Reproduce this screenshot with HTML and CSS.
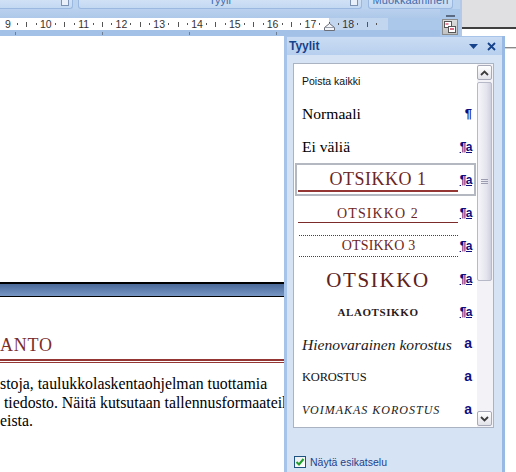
FILE: index.html
```html
<!DOCTYPE html>
<html lang="fi">
<head>
<meta charset="utf-8">
<title>Tyylit</title>
<link rel="stylesheet" href="styles.css">
</head>
<body>
<div class="app">
  <div class="top">
    <div class="ribbon">
      <div class="groups">
        <div class="grp g1"><span class="launch"></span></div>
        <div class="grp g2"><span class="glabel">Tyyli</span><span class="launch"></span></div>
        <div class="grp g3"><span class="glabel">Muokkaaminen</span></div>
      </div>
      <div class="rulerrow">
        <div class="rulercol">
          <div class="band"></div>
          <div class="ruler">
            <div class="u"><span class="s n">9</span><span class="s"><i class="dot"></i></span><span class="s"><i class="tick"></i></span><span class="s"><i class="dot"></i></span></div>
            <div class="u"><span class="s n">10</span><span class="s"><i class="dot"></i></span><span class="s"><i class="tick"></i></span><span class="s"><i class="dot"></i></span></div>
            <div class="u"><span class="s n">11</span><span class="s"><i class="dot"></i></span><span class="s"><i class="tick"></i></span><span class="s"><i class="dot"></i></span></div>
            <div class="u"><span class="s n">12</span><span class="s"><i class="dot"></i></span><span class="s"><i class="tick"></i></span><span class="s"><i class="dot"></i></span></div>
            <div class="u"><span class="s n">13</span><span class="s"><i class="dot"></i></span><span class="s"><i class="tick"></i></span><span class="s"><i class="dot"></i></span></div>
            <div class="u"><span class="s n">14</span><span class="s"><i class="dot"></i></span><span class="s"><i class="tick"></i></span><span class="s"><i class="dot"></i></span></div>
            <div class="u"><span class="s n">15</span><span class="s"><i class="dot"></i></span><span class="s"><i class="tick"></i></span><span class="s"><i class="dot"></i></span></div>
            <div class="u"><span class="s n">16</span><span class="s"><i class="dot"></i></span><span class="s"><i class="tick"></i></span><span class="s"><i class="dot"></i></span></div>
            <div class="u"><span class="s n">17</span><span class="s"><i class="dot"></i></span><span class="s"><i class="tick"></i></span><span class="s"><i class="dot"></i></span></div>
            <div class="u"><span class="s n">18</span><span class="s"><i class="dot"></i></span><span class="s"><i class="tick"></i></span><span class="s"><i class="dot"></i></span></div>
            <svg class="indent" width="11" height="8" viewBox="0 0 11 8"><path d="M0.5 7.5 V4.5 L5.5 0.5 L10.5 4.5 V7.5 Z" fill="#f4f6fa" stroke="#6a6f78"/><path d="M1 4.5 H10" stroke="#9aa0aa"/></svg>
          </div>
          <div class="marks"><i></i><i></i><i></i><i></i></div>
        </div>
        <div class="sidecol">
          <div class="dash"></div>
          <div class="viewbtn">
            <svg width="14" height="14" viewBox="0 0 14 14">
              <rect x="1.5" y="1.5" width="7" height="6" fill="#fff" stroke="#555"/>
              <rect x="2.5" y="3" width="3" height="2" fill="#e58aa0"/>
              <rect x="5.5" y="6.5" width="7" height="6" fill="#fff" stroke="#555"/>
              <rect x="7" y="8" width="4" height="2" fill="#d96a86"/>
            </svg>
          </div>
        </div>
      </div>
    </div>
    <div class="win"></div>
  </div>

  <div class="main">
    <div class="doc">
      <div class="docgap"></div>
      <div class="docband"></div>
      <div class="doch">ANTO</div>
      <div class="docrule"></div>
      <div class="docp">
        <div class="ln">stoja, taulukkolaskentaohjelman tuottamia</div>
        <div class="ln"> tiedosto. Näitä kutsutaan tallennusformaateiksi</div>
        <div class="ln">eista.</div>
      </div>
    </div>

    <div class="pane">
      <div class="ptitle">
        <span class="ptext">Tyylit</span>
        <span class="pbtns">
          <svg width="9" height="5" viewBox="0 0 9 5"><path d="M0 0 H9 L4.5 5 Z" fill="#15428b"/></svg>
          <svg width="9" height="9" viewBox="0 0 9 9"><path d="M1 1 L8 8 M8 1 L1 8" stroke="#15428b" stroke-width="1.8"/></svg>
        </span>
      </div>
      <div class="pbody">
        <div class="list">
          <div class="items">
            <div class="row"><div class="pv plain clr">Poista kaikki</div><div class="ic"></div></div>
            <div class="row"><div class="pv plain norm">Normaali</div><div class="ic"><span class="para">¶</span></div></div>
            <div class="row"><div class="pv plain norm">Ei väliä</div><div class="ic"><span class="pa">¶a</span></div></div>
            <div class="row sel"><div class="pv h1">OTSIKKO 1</div><div class="ic"><span class="pa">¶a</span></div></div>
            <div class="row"><div class="pv h2">OTSIKKO 2</div><div class="ic"><span class="pa">¶a</span></div></div>
            <div class="row"><div class="pv h3">OTSIKKO 3</div><div class="ic"><span class="pa">¶a</span></div></div>
            <div class="row"><div class="pv ttl">OTSIKKO</div><div class="ic"><span class="pa">¶a</span></div></div>
            <div class="row"><div class="pv sub">ALAOTSIKKO</div><div class="ic"><span class="pa">¶a</span></div></div>
            <div class="row"><div class="pv plain subtle">Hienovarainen korostus</div><div class="ic"><span class="ca">a</span></div></div>
            <div class="row"><div class="pv plain emph">KOROSTUS</div><div class="ic"><span class="ca">a</span></div></div>
            <div class="row"><div class="pv plain intense">VOIMAKAS KOROSTUS</div><div class="ic"><span class="ca">a</span></div></div>
          </div>
          <div class="sbar">
            <div class="sbtn"><svg width="9" height="6" viewBox="0 0 9 6"><path d="M1 5 L4.5 1.5 L8 5" fill="none" stroke="#3c3c3c" stroke-width="1.8"/></svg></div>
            <div class="thumb"><i></i><i></i><i></i></div>
            <div class="strack"></div>
            <div class="sbtn"><svg width="9" height="6" viewBox="0 0 9 6"><path d="M1 1 L4.5 4.5 L8 1" fill="none" stroke="#3c3c3c" stroke-width="1.8"/></svg></div>
          </div>
        </div>
        <div class="chkrow">
          <span class="chk"><svg width="10" height="10" viewBox="0 0 10 10"><path d="M1.5 5 L4 7.5 L8.5 2" fill="none" stroke="#1e9e2a" stroke-width="2"/></svg></span>
          <span class="chklabel">Näytä esikatselu</span>
        </div>
      </div>
    </div>

    <div class="edge"><div class="edgeline"></div></div>
  </div>
</div>
</body>
</html>
```

FILE: styles.css
```css
* { box-sizing: border-box; }
html, body { margin: 0; padding: 0; }
body {
  width: 516px;
  height: 472px;
  overflow: hidden;
  background: #fff;
  font-family: "Liberation Sans", Arial, sans-serif;
}
.app { display: flex; flex-direction: column; width: 516px; height: 472px; }

/* ---------- top: ribbon + ruler ---------- */
.top { display: flex; height: 36px; flex: none; }
.ribbon { width: 460px; display: flex; flex-direction: column; background: #abc7ea; }
.groups {
  height: 9px; display: flex; overflow: hidden;
  background: #bcd3ef;
}
.grp {
  height: 9px;
  position: relative;
  display: flex; justify-content: center; align-items: flex-end;
  background: linear-gradient(#d0e1f6, #c3d8f2);
  border: 1px solid #9ab8e0; border-top: none;
  border-radius: 0 0 3px 3px;
  overflow: hidden;
}
.g1 { width: 73px; border-left: none; border-radius: 0 0 3px 0; }
.g2 { width: 284px; margin-left: 5px; }
.g3 { width: 85px; margin-left: 6px; }
.glabel {
  font-size: 11px; line-height: 11px; color: #3f6cab;
  margin-bottom: 2px; white-space: nowrap;
}
.g3 .glabel { letter-spacing: 0.1px; }
.launch {
  position: absolute; right: 3px; bottom: 2px;
  width: 8px; height: 6px;
  border: 1px solid #7d93b3; border-top: none;
  background: #e9f0fa;
}

.rulerrow { display: flex; height: 27px; }
.rulercol { width: 440px; display: flex; flex-direction: column; }
.band { height: 9px; background: linear-gradient(#bad1ee, #adc8ea); }
.ruler {
  position: relative;
  width: 388px; height: 12px;
  display: flex; padding-left: 3.3px;
  background: linear-gradient(90deg, #fff 0 329px, #c2d6ef 329px);
}
.u { display: flex; width: 37.8px; flex: none; }
.s {
  width: 9.45px; flex: none; height: 12px;
  display: flex; justify-content: center; align-items: center;
}
.n { font-size: 10.5px; line-height: 12px; color: #333; }
.dot { display: block; width: 1px; height: 2px; background: #555; }
.tick { display: block; width: 1px; height: 5px; background: #555; }
.indent { position: absolute; left: 324px; top: 5px; }
.marks {
  height: 6px; display: flex; gap: 86px; padding-left: 15px;
  background: #a3c1e7;
}
.marks i { display: block; width: 1px; height: 3px; margin-top: 2px; background: #6f7f96; }

.sidecol { width: 20px; display: flex; flex-direction: column; }
.dash { width: 9px; height: 2px; margin: 6px 0 0 6px; background: #5a6a82; }
.viewbtn {
  width: 16px; height: 16px; margin: 2px 0 0 2px;
  background: linear-gradient(#dcdcdc, #c2c2c2);
  border: 1px solid #8c8c8c;
  display: flex; align-items: center; justify-content: center;
}

.win {
  width: 56px;
  border-left: 2px solid #b3c9e7;
  background: linear-gradient(#e0e0e3 0 27px, #3f3f3f 27px 29px, #fff 29px);
}

/* ---------- main ---------- */
.main { flex: 1; display: flex; min-height: 0; }

.doc {
  width: 284px; flex: none; overflow: hidden;
  display: flex; flex-direction: column;
  background: #fff;
  font-family: "Liberation Serif", "Times New Roman", serif;
}
.docgap { height: 246px; flex: none; }
.docband {
  height: 15px; flex: none;
  border-top: 2px solid #000; border-bottom: 1px solid #000;
  background: linear-gradient(#4a6999, #7896c4);
}
.doch {
  margin-top: 38px; height: 24px; flex: none;
  font-size: 18px; line-height: 20px; letter-spacing: 0.8px;
  color: #7a2d2b; white-space: nowrap;
}
.docrule {
  height: 4px; flex: none;
  border-top: 2px solid #943634; border-bottom: 1px solid #943634;
}
.docp { margin-top: 12px; font-size: 15.8px; line-height: 18.5px; color: #000; }
.ln { white-space: pre; }

/* ---------- task pane ---------- */
.pane {
  width: 221px; flex: none;
  display: flex; flex-direction: column;
  background: #d5e3f4;
  border-left: 3px solid #a6c3e9;
  border-right: 3px solid #98b9e4;
}
.ptitle {
  height: 19px; flex: none;
  display: flex; align-items: center; justify-content: space-between;
  padding: 0 6px 0 2px;
  background: linear-gradient(#cadcf3, #b7cfee);
  border-top: 1px solid #a9c4e9;
}
.ptext { font-weight: bold; font-size: 12px; color: #15428b; }
.pbtns { display: flex; align-items: center; gap: 9px; }

.pbody { flex: 1; padding: 8px 8px 0 6px; display: flex; flex-direction: column; }
.list {
  height: 365px; flex: none;
  display: flex;
  background: #fff;
  border: 1px solid #a9b3c1;
}
.items { width: 183px; display: flex; flex-direction: column; }
.row { height: 33px; flex: none; display: flex; align-items: center; }
.pv {
  width: 160px; margin-left: 4px; flex: none;
  font-family: "Liberation Serif", "Times New Roman", serif;
  white-space: nowrap; color: #000;
}
.plain { padding-left: 4px; }
.ic {
  width: 19px; flex: none; padding-right: 5px;
  display: flex; justify-content: flex-end;
  font-family: "Liberation Sans", Arial, sans-serif; font-weight: bold;
  color: #0e0e7e;
}
.para { font-size: 13px; line-height: 14px; }
.pa { font-size: 12px; line-height: 14px; text-decoration: underline; letter-spacing: -0.5px; }
.ca { font-size: 14px; line-height: 14px; margin-top: -3px; }

.clr { font-family: "Liberation Sans", Arial, sans-serif; font-size: 10.5px; color: #111; }
.norm { font-size: 15.6px; }

.row.sel { border: 2px solid #b3b8c1; margin: 0 1px; align-items: flex-end; }
.row.sel .pv { margin-left: 1px; }
.row.sel .ic { width: 16px; padding-right: 2px; align-self: center; }
.h1 {
  margin-bottom: 2px;
  text-align: center; font-size: 18px; line-height: 21px; letter-spacing: 0.5px;
  color: #6c2624;
  border-bottom: 2px solid #943634;
}
.h2 {
  align-self: flex-start; margin-top: 10px;
  text-align: center; font-size: 14px; line-height: 16px; letter-spacing: 1.1px;
  color: #6c2624;
  border-bottom: 1px solid #7b2c2a;
}
.h3 {
  align-self: flex-start; margin-top: 6px; margin-left: 5px; width: 159px;
  text-align: center; font-size: 14px; line-height: 20px; letter-spacing: 0.2px;
  color: #6c2624;
  border-top: 1px dotted #7b2c2a; border-bottom: 1px dotted #7b2c2a;
}
.ttl {
  padding-top: 2px;
  text-align: center; font-size: 21px; line-height: 24px; letter-spacing: 1.6px;
  color: #5e2220;
}
.sub {
  text-align: center; font-size: 11px; font-weight: bold; letter-spacing: 0.6px;
  color: #2a1a1a;
}
.subtle { font-size: 15.6px; font-style: italic; color: #1a1a1a; }
.emph { font-size: 12.5px; letter-spacing: -0.2px; color: #111; }
.intense { font-size: 12px; font-style: italic; letter-spacing: 1px; color: #1a1a1a; }

.sbar {
  width: 16px; flex: none;
  display: flex; flex-direction: column;
  padding: 1px 1px 1px 0;
  background: #f3f3f7;
}
.sbtn {
  height: 15px; flex: none;
  display: flex; align-items: center; justify-content: center;
  border: 1px solid #a9aab9; border-radius: 2px;
  background: linear-gradient(#ffffff, #e2e2ea);
}
.thumb {
  height: 199px; flex: none; margin-top: 2px;
  display: flex; flex-direction: column; justify-content: center; align-items: center; gap: 1px;
  border: 1px solid #b7b8c8; border-radius: 2px;
  background: linear-gradient(90deg, #f6f6fa, #e4e4ee 65%, #cfd0de);
}
.thumb i { display: block; width: 7px; height: 1px; background: #9c9db0; }
.strack { flex: 1; }

.chkrow { margin-top: 28px; display: flex; align-items: center; height: 12px; padding-left: 1px; }
.chk {
  width: 12px; height: 12px; flex: none;
  border: 1px solid #1c5180;
  background: linear-gradient(135deg, #e9ecef, #fff);
  display: flex; align-items: center; justify-content: center;
}
.chklabel { margin-left: 4px; font-size: 10.5px; color: #1f3f8a; white-space: nowrap; }

.edge { flex: 1; background: #fff; }
.edgeline { margin-top: 11px; height: 2px; border-top: 1px solid #8a8a8a; border-bottom: 1px solid #d0d0d0; }
```
